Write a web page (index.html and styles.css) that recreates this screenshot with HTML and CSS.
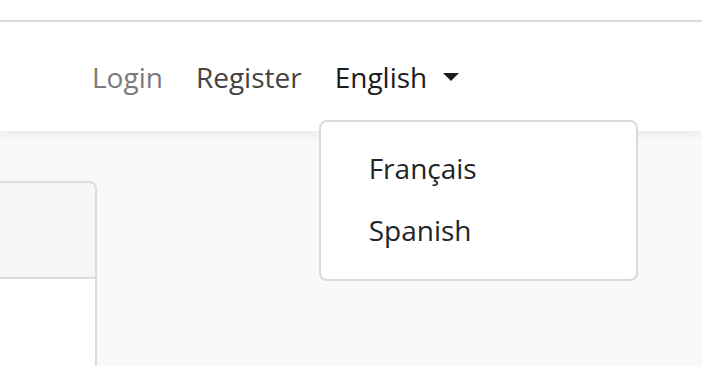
FILE: index.html
```html
<!DOCTYPE html>
<html lang="en">
<head>
    <meta charset="UTF-8">
    <meta name="viewport" content="width=device-width, initial-scale=1.0">
    <title>Language menu</title>
    <link rel="stylesheet" href="styles.css">
</head>
<body>
    <div class="topbar"></div>
    <nav class="navbar">
        <ul class="nav-links">
            <li><a class="nav-link muted" href="#">Login</a></li>
            <li><a class="nav-link" href="#">Register</a></li>
            <li class="dropdown">
                <a class="nav-link active" href="#">English <span class="caret"></span></a>
                <div class="dropdown-menu">
                    <a class="dropdown-item" href="#">Français</a>
                    <a class="dropdown-item" href="#">Spanish</a>
                </div>
            </li>
        </ul>
    </nav>
    <main class="content">
        <div class="card">
            <div class="card-header"></div>
            <div class="card-body"></div>
        </div>
    </main>
</body>
</html>
```

FILE: styles.css
```css
html, body {
    margin: 0;
    height: 100%;
}
body {
    font-family: "Open Sans", "Noto Sans", sans-serif;
    background-color: #f8f9fb;
    overflow: hidden;
}
.topbar {
    height: 20px;
    background: white;
    border-bottom: 2px solid #dcdcde;
}
.navbar {
    position: relative;
    z-index: 2;
    height: 109px;
    background: white;
    box-shadow: 0 4px 10px rgba(0,0,0,0.06);
    display: flex;
    align-items: center;
}
.nav-links {
    list-style: none;
    margin: 0;
    padding: 0 0 0 92px;
    display: flex;
    gap: 33px;
    font-size: 28px;
}
.nav-link {
    color: #444;
    text-decoration: none;
    display: flex;
    align-items: center;
}
.nav-link.muted {
    color: #7a7a7a;
}
.nav-link.active {
    color: #1c1c1c;
}
.caret {
    display: inline-block;
    margin-left: 16px;
    border-left: 8px solid transparent;
    border-right: 8px solid transparent;
    border-top: 8px solid #1c1c1c;
}
.dropdown {
    position: relative;
}
.dropdown-menu {
    position: absolute;
    left: -16px;
    top: 62px;
    width: 315px;
    padding: 15px 0 18px;
    background: white;
    border: 2px solid #dadadc;
    border-radius: 8px;
    display: flex;
    flex-direction: column;
}
.dropdown-item {
    color: #212529;
    text-decoration: none;
    padding: 0 48px;
    line-height: 54px;
    margin: 4px 0;
    display: block;
}
.content {
    padding-top: 50px;
}
.card {
    width: 95px;
    background: white;
    border: 2px solid #dcdcdc;
    border-left: none;
    border-bottom: none;
    border-radius: 0 8px 0 0;
}
.card-header {
    height: 94px;
    background: #f6f6f6;
    border-bottom: 2px solid #dcdcdc;
    border-radius: 0 8px 0 0;
}
.card-body {
    height: 88px;
}
```
